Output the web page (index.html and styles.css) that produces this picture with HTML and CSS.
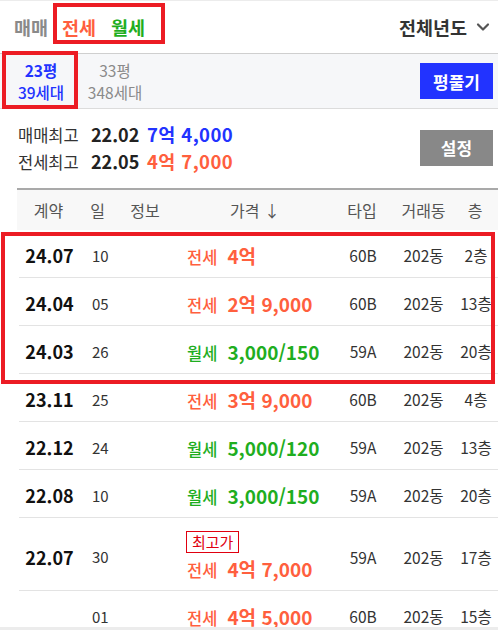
FILE: index.html
```html
<!DOCTYPE html>
<html lang="ko">
<head>
<meta charset="utf-8">
<link rel="stylesheet" href="styles.css">
</head>
<body>
<div class="page">
  <header class="topbar">
    <nav class="tabs">
      <span class="tab tab-sale">매매</span>
      <span class="tab tab-jeonse">전세</span>
      <span class="tab tab-wolse">월세</span>
    </nav>
    <div class="year-select">전체년도
      <svg class="chev" width="14" height="14" viewBox="0 0 14 14"><polyline points="2,4.5 7,9.5 12,4.5" fill="none" stroke="#555" stroke-width="2.2" stroke-linecap="round" stroke-linejoin="round"/></svg>
    </div>
  </header>

  <section class="sizes">
    <div class="size size-active"><span class="py">23평</span><span class="hh">39세대</span></div>
    <div class="size"><span class="py">33평</span><span class="hh">348세대</span></div>
    <button class="btn btn-blue">평풀기</button>
  </section>

  <section class="summary">
    <div class="sum-lines">
      <div class="sum-line"><span class="sum-label">매매최고</span><span class="sum-date">22.02</span><span class="sum-price c-blue">7억 4,000</span></div>
      <div class="sum-line"><span class="sum-label">전세최고</span><span class="sum-date">22.05</span><span class="sum-price c-orange">4억 7,000</span></div>
    </div>
    <button class="btn btn-gray">설정</button>
  </section>

  <section class="table">
    <div class="thead">
      <span class="c-date">계약</span>
      <span class="c-day">일</span>
      <span class="c-info">정보</span>
      <span class="c-price">가격 ↓</span>
      <span class="c-type">타입</span>
      <span class="c-dong">거래동</span>
      <span class="c-floor">층</span>
    </div>

    <div class="row">
      <span class="c-date">24.07</span><span class="c-day">10</span><span class="c-info"></span>
      <span class="c-price"><span class="price c-orange"><span class="kind">전세</span><span class="amt">4억</span></span></span>
      <span class="c-type">60B</span><span class="c-dong">202동</span><span class="c-floor">2층</span>
    </div>
    <div class="row">
      <span class="c-date">24.04</span><span class="c-day">05</span><span class="c-info"></span>
      <span class="c-price"><span class="price c-orange"><span class="kind">전세</span><span class="amt">2억 9,000</span></span></span>
      <span class="c-type">60B</span><span class="c-dong">202동</span><span class="c-floor">13층</span>
    </div>
    <div class="row year-end">
      <span class="c-date">24.03</span><span class="c-day">26</span><span class="c-info"></span>
      <span class="c-price"><span class="price c-green"><span class="kind">월세</span><span class="amt">3,000/150</span></span></span>
      <span class="c-type">59A</span><span class="c-dong">202동</span><span class="c-floor">20층</span>
    </div>
    <div class="row">
      <span class="c-date">23.11</span><span class="c-day">25</span><span class="c-info"></span>
      <span class="c-price"><span class="price c-orange"><span class="kind">전세</span><span class="amt">3억 9,000</span></span></span>
      <span class="c-type">60B</span><span class="c-dong">202동</span><span class="c-floor">4층</span>
    </div>
    <div class="row year-end">
      <span class="c-date">22.12</span><span class="c-day">24</span><span class="c-info"></span>
      <span class="c-price"><span class="price c-green"><span class="kind">월세</span><span class="amt">5,000/120</span></span></span>
      <span class="c-type">59A</span><span class="c-dong">202동</span><span class="c-floor">13층</span>
    </div>
    <div class="row">
      <span class="c-date">22.08</span><span class="c-day">10</span><span class="c-info"></span>
      <span class="c-price"><span class="price c-green"><span class="kind">월세</span><span class="amt">3,000/150</span></span></span>
      <span class="c-type">59A</span><span class="c-dong">202동</span><span class="c-floor">20층</span>
    </div>
    <div class="row row-tall">
      <span class="c-date">22.07</span><span class="c-day">30</span><span class="c-info"></span>
      <span class="c-price stack"><span class="badge">최고가</span><span class="price c-orange"><span class="kind">전세</span><span class="amt">4억 7,000</span></span></span>
      <span class="c-type">59A</span><span class="c-dong">202동</span><span class="c-floor">17층</span>
    </div>
    <div class="row">
      <span class="c-date"></span><span class="c-day">01</span><span class="c-info"></span>
      <span class="c-price"><span class="price c-orange"><span class="kind">전세</span><span class="amt">4억 5,000</span></span></span>
      <span class="c-type">60B</span><span class="c-dong">202동</span><span class="c-floor">15층</span>
    </div>
  </section>

  <div class="mark mark-tabs"></div>
  <div class="mark mark-size"></div>
  <div class="mark mark-rows"></div>
  <div class="bottom-bar"></div>
</div>
</body>
</html>
```

FILE: styles.css
```css
* { box-sizing: border-box; }
html, body { margin: 0; padding: 0; background: #fff; }
body {
  font-family: "Noto Sans CJK KR", "Noto Sans", sans-serif;
  color: #333;
  width: 498px;
  overflow: hidden;
}
.page { position: relative; width: 498px; min-height: 630px; }

.c-blue { color: #2233ff; }
.c-orange { color: #ff5f3e; }
.c-green { color: #1fae1f; }

/* top bar */
.topbar {
  height: 54px;
  border-top: 1px solid #ececec;
  border-bottom: 1px solid #cfcfcf;
  display: flex;
  align-items: center;
  justify-content: space-between;
  padding: 0 8px 0 14px;
}
.tabs { display: flex; gap: 14px; }
.tab { font-size: 18.5px; font-weight: 700; line-height: 24px; }
.tab-sale { color: #8a8a8a; }
.tab-jeonse { color: #ff5f3e; }
.tab-wolse { color: #1fae1f; margin-left: 1px; }
.year-select {
  display: flex;
  align-items: center;
  gap: 9px;
  font-size: 18.5px;
  font-weight: 700;
  color: #333;
  line-height: 24px;
}
.chev { display: block; }

/* sizes */
.sizes {
  height: 55px;
  background: #f6f7f9;
  border-bottom: 1px solid #dcdcdc;
  display: flex;
  align-items: center;
  padding: 0 5px 0 10px;
}
.size {
  width: 62px;
  display: flex;
  flex-direction: column;
  align-items: center;
  font-size: 15.5px;
  line-height: 22px;
  color: #8a8a8a;
}
.size + .size { margin-left: 12px; }
.size-active { color: #2233ff; }
.size-active .py { font-weight: 700; }
.size-active .hh { font-weight: 500; }

.btn {
  margin-left: auto;
  width: 73px;
  height: 36px;
  border: 0;
  color: #fff;
  font-family: inherit;
  font-size: 17px;
  font-weight: 700;
  padding: 0;
}
.btn-blue { background: #2233ff; }
.btn-gray { background: #888; }

/* summary */
.summary {
  height: 79px;
  display: flex;
  align-items: center;
  padding: 0 5px 2px 18px;
}
.sum-lines { display: flex; flex-direction: column; }
.sum-line { display: flex; align-items: baseline; height: 27px; line-height: 27px; }
.sum-label { font-size: 16.5px; color: #333; width: 73px; }
.sum-date { font-size: 18px; font-weight: 700; color: #222; width: 56px; }
.sum-price { font-size: 18.5px; font-weight: 700; letter-spacing: 0.4px; }

/* table */
.table { margin-left: 17px; border-top: 2px solid #a9a9a9; }
.thead, .row {
  display: grid;
  grid-template-columns: 63px 35px 60px 160px 54px 69px 34px;
  padding-right: 6px;
  align-items: center;
}
.thead {
  height: 40px;
  background: #f8f8f8;
  font-size: 16px;
  color: #555;
  text-align: center;
}
.row {
  height: 48px;
  padding-top: 3px;
  border-bottom: 1px solid #e3e3e3;
  margin-left: 2px;
  grid-template-columns: 61px 35px 60px 160px 54px 69px 34px;
  font-size: 15.5px;
  color: #333;
}
.row-tall { height: 73px; padding-top: 5px; }
.row .c-date {
  font-size: 18px;
  font-weight: 700;
  color: #111;
  text-align: center;
}
.row.year-end { box-shadow: inset 0 -1px 0 0 transparent; }
.row.year-end .c-date { position: relative; }
.row .c-day { padding-left: 12px; font-size: 15px; }
.row .c-price { padding-left: 12px; }
.row .c-type, .row .c-dong, .row .c-floor { text-align: center; }
.row .c-type { padding-left: 2px; }
.row .c-floor { padding-left: 2px; }

.price { display: flex; align-items: baseline; white-space: nowrap; }
.kind { font-size: 16.5px; font-weight: 500; margin-right: 10px; }
.amt { font-size: 19px; font-weight: 700; }

.stack { display: flex; flex-direction: column; align-items: flex-start; gap: 2px; }
.badge {
  border: 1px solid #e0000f;
  color: #e0000f;
  font-size: 15px;
  line-height: 20px;
  padding: 0 5px;
  margin-left: -1px;
}

/* annotation overlays */
.mark { position: absolute; border: 4px solid #ec1c24; pointer-events: none; }
.mark-tabs { left: 53px; top: 3px; width: 112px; height: 41px; }
.mark-size { left: 2px; top: 51px; width: 76px; height: 58px; }
.mark-rows { left: 1px; top: 232px; width: 494px; height: 152px; }

.bottom-bar {
  position: fixed;
  left: 0; right: 0; bottom: 0;
  height: 3px;
  background: #ececec;
}
```
